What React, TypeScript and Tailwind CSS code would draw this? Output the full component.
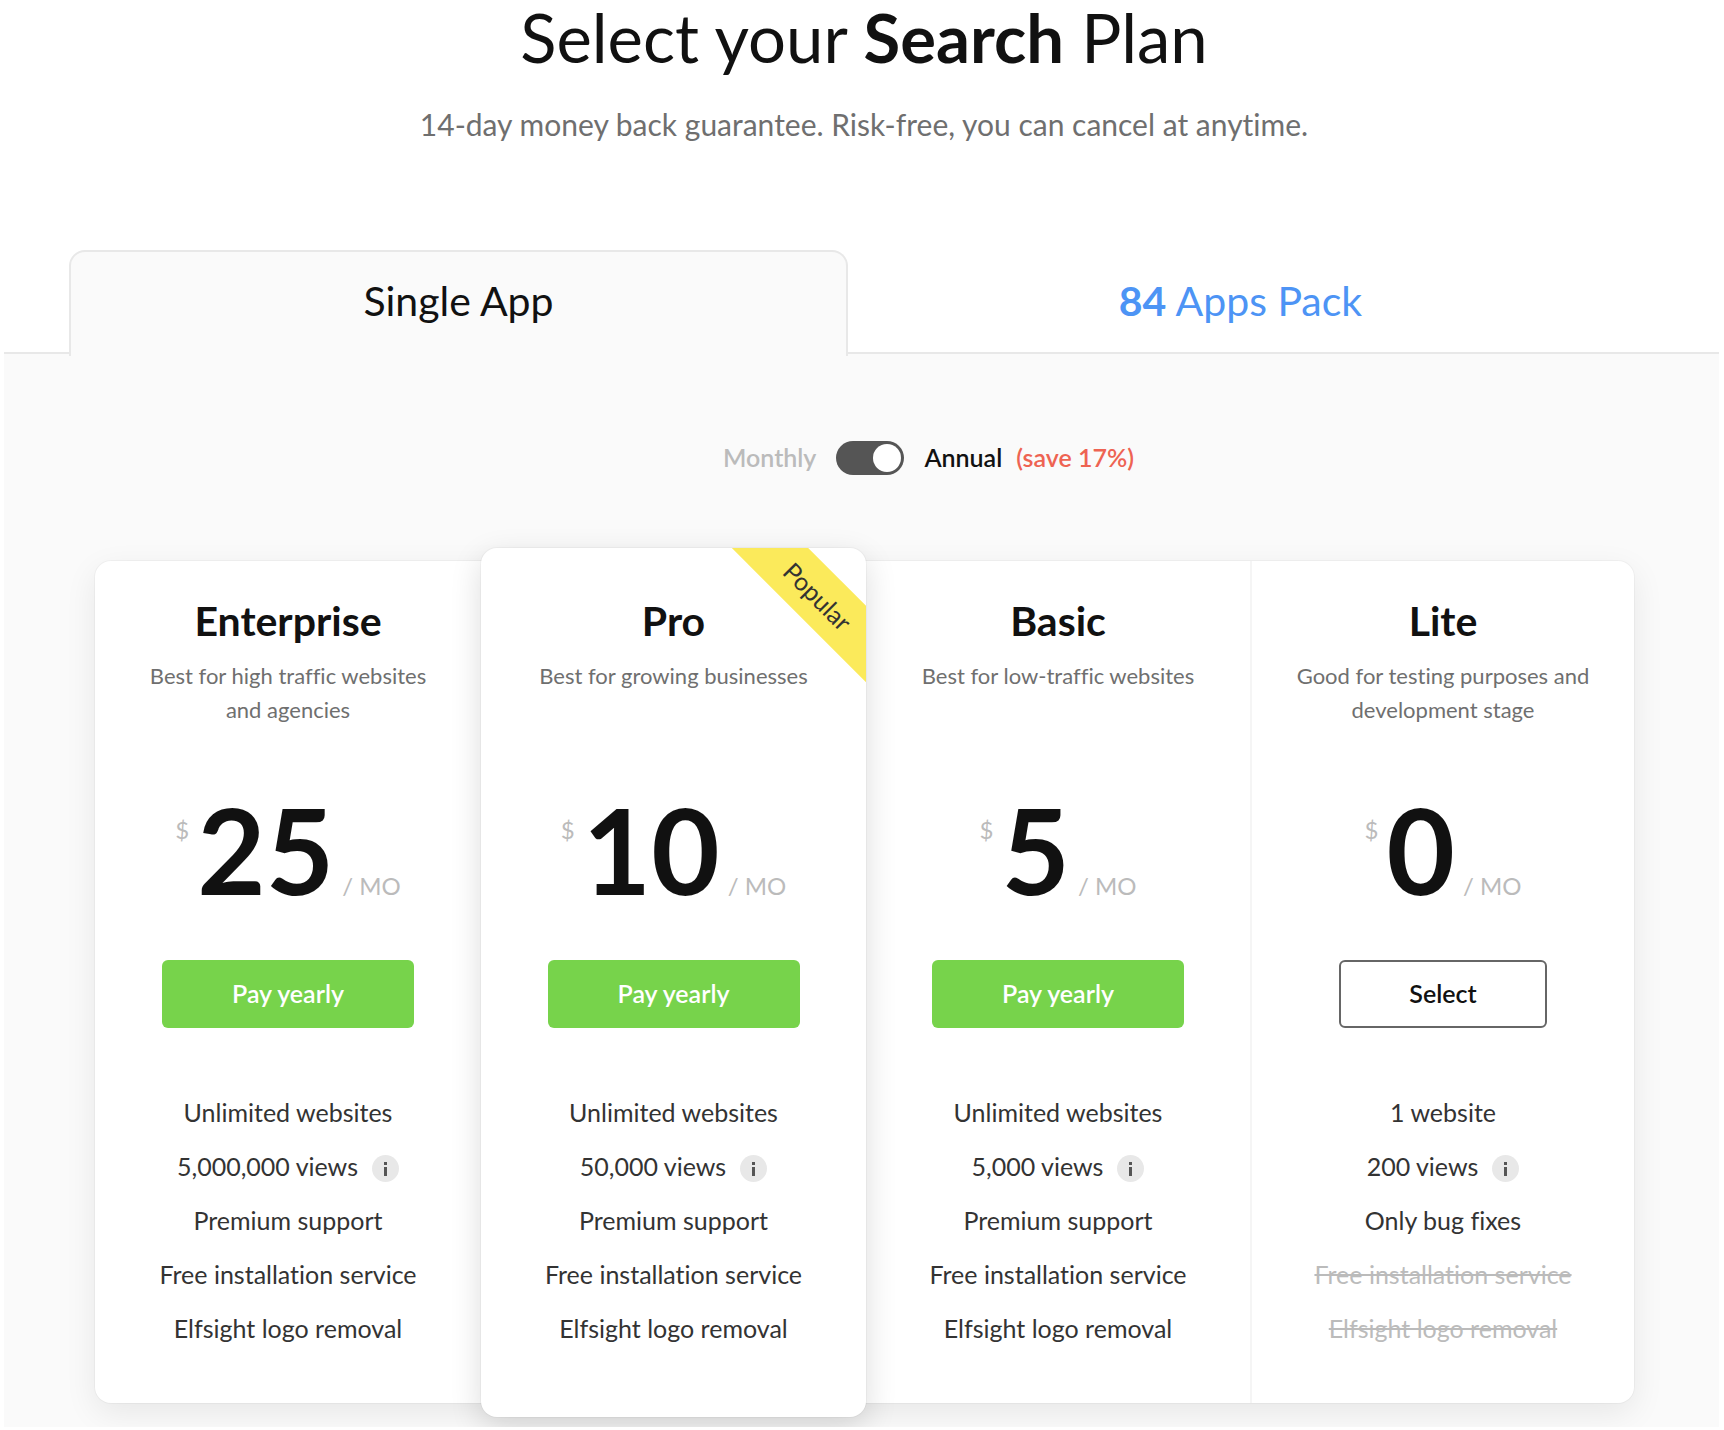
import { useState } from "react";
import clsx from "clsx";

type Feature = { text: string; info?: boolean; off?: boolean };

type Plan = {
  name: string;
  description: string;
  price: string;
  action: string;
  free?: boolean;
  popular?: boolean;
  features: Feature[];
};

const commonExtras: Feature[] = [
  { text: "Premium support" },
  { text: "Free installation service" },
  { text: "Elfsight logo removal" },
];

const plans: Plan[] = [
  {
    name: "Enterprise",
    description: "Best for high traffic websites and agencies",
    price: "25",
    action: "Pay yearly",
    features: [{ text: "Unlimited websites" }, { text: "5,000,000 views", info: true }, ...commonExtras],
  },
  {
    name: "Pro",
    description: "Best for growing businesses",
    price: "10",
    action: "Pay yearly",
    popular: true,
    features: [{ text: "Unlimited websites" }, { text: "50,000 views", info: true }, ...commonExtras],
  },
  {
    name: "Basic",
    description: "Best for low-traffic websites",
    price: "5",
    action: "Pay yearly",
    features: [{ text: "Unlimited websites" }, { text: "5,000 views", info: true }, ...commonExtras],
  },
  {
    name: "Lite",
    description: "Good for testing purposes and development stage",
    price: "0",
    action: "Select",
    free: true,
    features: [
      { text: "1 website" },
      { text: "200 views", info: true },
      { text: "Only bug fixes" },
      { text: "Free installation service", off: true },
      { text: "Elfsight logo removal", off: true },
    ],
  },
];

function InfoButton() {
  return (
    <button type="button" aria-label="About views" className="mt-1 size-[27px] shrink-0 rounded-full bg-[#e8e8e8]">
      <svg viewBox="0 0 27 27" className="size-full" aria-hidden="true">
        <rect x="12" y="7" width="3" height="3" fill="#555" />
        <rect x="12" y="12" width="3" height="9" fill="#555" />
      </svg>
    </button>
  );
}

function PlanCard({ plan, divided }: { plan: Plan; divided: boolean }) {
  return (
    <article
      className={clsx(
        "flex flex-col items-center text-center",
        plan.popular
          ? "relative z-10 -mt-[13px] -mb-[14px] overflow-hidden rounded-2xl bg-white pt-[49px] pb-[62px] shadow-[0_0_0_1px_rgba(0,0,0,0.03),0_10px_32px_rgba(0,0,0,0.14)]"
          : "pt-9 pb-12",
        divided && "border-r-2 border-[#f5f5f5]",
      )}
    >
      {plan.popular && (
        <span className="absolute top-[21px] -right-[52px] w-[200px] rotate-45 bg-[#fbea5b] text-center text-[25px] leading-[54px] text-[#333]">
          Popular
        </span>
      )}
      <h2 className="text-[41px] leading-[48px] font-bold text-[#111]">{plan.name}</h2>
      <p className="mt-[14px] min-h-[68px] w-full max-w-[310px] text-[22px] leading-[34px] text-[#6f6f6f]">
        {plan.description}
      </p>
      <p className="mt-[66px] flex items-baseline text-[24px] text-[#bbb]">
        <span className="mt-[13px] self-start leading-[48px]">$</span>
        <span className="mx-2 text-[118px] leading-[114px] font-bold text-[#111]">{plan.price}</span>
        <span>/ MO</span>
      </p>
      <button
        type="button"
        className={clsx(
          "mt-[53px] h-[68px] rounded-md text-[25px] font-semibold",
          plan.free ? "w-[208px] border-2 border-[#666] bg-white text-[#111]" : "w-[252px] bg-[#77d34b] text-white",
        )}
      >
        {plan.action}
      </button>
      <ul className="mt-[57px] text-[25px] leading-[54px] text-[#333]">
        {plan.features.map((feature) => (
          <li
            key={feature.text}
            className={clsx(
              "flex items-center justify-center gap-[14px] whitespace-nowrap",
              feature.off && "text-[#bbb] line-through",
            )}
          >
            {feature.text}
            {feature.info && <InfoButton />}
          </li>
        ))}
      </ul>
    </article>
  );
}

export default function App() {
  const [annual, setAnnual] = useState(true);

  return (
    <main className="bg-white pb-1 font-['Lato',sans-serif] text-[#111] [font-variant-ligatures:none]">
      <header className="pl-1 text-center">
        <h1 className="text-[67px] leading-[74px]">
          Select your <b className="font-bold">Search</b> Plan
        </h1>
        <p className="mt-[30px] text-[30px] leading-[40px] text-[#6f6f6f]">
          14-day money back guarantee. Risk-free, you can cancel at anytime.
        </p>
      </header>

      <div role="tablist" className="relative z-10 mt-[106px] -mb-1 mr-[91px] ml-[69px] grid grid-cols-[779fr_785fr]">
        <button
          type="button"
          role="tab"
          aria-selected="true"
          className="h-[106px] rounded-t-2xl border-2 border-b-0 border-[#e8e8e8] bg-[#fafafa] pb-1.5 text-[41px]"
        >
          Single App
        </button>
        <button type="button" role="tab" aria-selected="false" className="h-[106px] pb-1 text-[41px] text-[#4d94f5]">
          <b className="font-bold">84</b> Apps Pack
        </button>
      </div>

      <section className="mr-[5px] ml-1 overflow-hidden border-t-2 border-[#e8e8e8] bg-[#fafafa] pt-[84px] pb-6">
        <div className="ml-[134px] flex h-10 items-center justify-center text-[25px] font-semibold">
          <label htmlFor="annual" className="text-[#bbb]">
            Monthly
          </label>
          <input
            id="annual"
            type="checkbox"
            role="switch"
            aria-label="Annual billing"
            checked={annual}
            onChange={() => setAnnual(!annual)}
            className="mx-5 flex h-[34px] w-[68px] appearance-none items-center rounded-full bg-[#555] px-[3px] before:size-7 before:rounded-full before:bg-white checked:justify-end"
          />
          <label htmlFor="annual">Annual</label>
          <span className="ml-[14px] text-[#ee6352]">(save 17%)</span>
        </div>

        <div className="mt-[83px] mr-[85px] ml-[91px] grid grid-cols-[386fr_385fr_386fr_382fr] rounded-2xl bg-white shadow-[0_0_0_1px_rgba(0,0,0,0.03),0_10px_32px_rgba(0,0,0,0.08)]">
          {plans.map((plan, index) => (
            <PlanCard key={plan.name} plan={plan} divided={index === 2} />
          ))}
        </div>
      </section>
    </main>
  );
}
